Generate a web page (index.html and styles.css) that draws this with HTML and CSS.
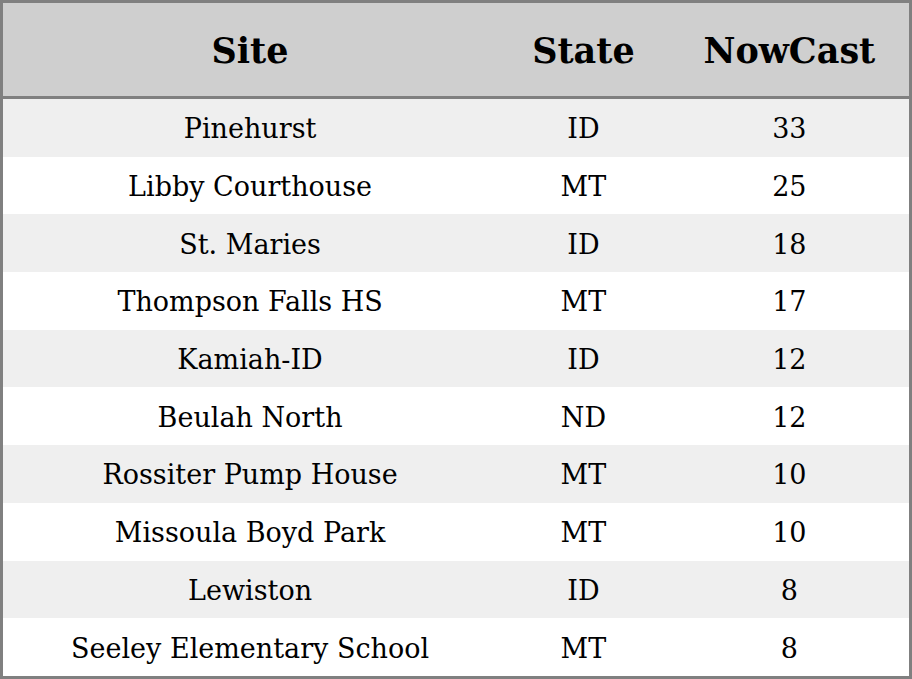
FILE: index.html
```html
<!DOCTYPE html>
<html>
<head>
<meta charset="utf-8">
<link rel="stylesheet" href="styles.css">
</head>
<body>
<table class="aq">
  <colgroup><col class="c-site"><col class="c-state"><col class="c-now"></colgroup>
  <thead>
    <tr><th>Site</th><th>State</th><th>NowCast</th></tr>
  </thead>
  <tbody>
    <tr><td>Pinehurst</td><td>ID</td><td>33</td></tr>
    <tr><td>Libby Courthouse</td><td>MT</td><td>25</td></tr>
    <tr><td>St. Maries</td><td>ID</td><td>18</td></tr>
    <tr><td>Thompson Falls HS</td><td>MT</td><td>17</td></tr>
    <tr><td>Kamiah-ID</td><td>ID</td><td>12</td></tr>
    <tr><td>Beulah North</td><td>ND</td><td>12</td></tr>
    <tr><td>Rossiter Pump House</td><td>MT</td><td>10</td></tr>
    <tr><td>Missoula Boyd Park</td><td>MT</td><td>10</td></tr>
    <tr><td>Lewiston</td><td>ID</td><td>8</td></tr>
    <tr><td>Seeley Elementary School</td><td>MT</td><td>8</td></tr>
  </tbody>
</table>
</body>
</html>
```
FILE: styles.css
```css
html, body { margin: 0; padding: 0; background: #fff; }
.aq {
  width: 912px;
  height: 679px;
  border-collapse: collapse;
  border: 3px solid #808080;
  font-family: "DejaVu Serif", serif;
  color: #000;
  table-layout: fixed;
}
.c-site { width: 494px; }
.c-state { width: 172px; }
.c-now { width: 240px; }
.aq th {
  background: #cfcfcf;
  font-size: 35px;
  font-weight: bold;
  height: 92px;
  padding: 1px 0 0;
  border-bottom: 3px solid #808080;
  text-align: center;
}
.aq td {
  font-size: 27px;
  text-align: center;
  padding: 2px 0 0;
  height: 55.7px;
}
.aq tbody tr:nth-child(odd) td { background: #efefef; }
```
